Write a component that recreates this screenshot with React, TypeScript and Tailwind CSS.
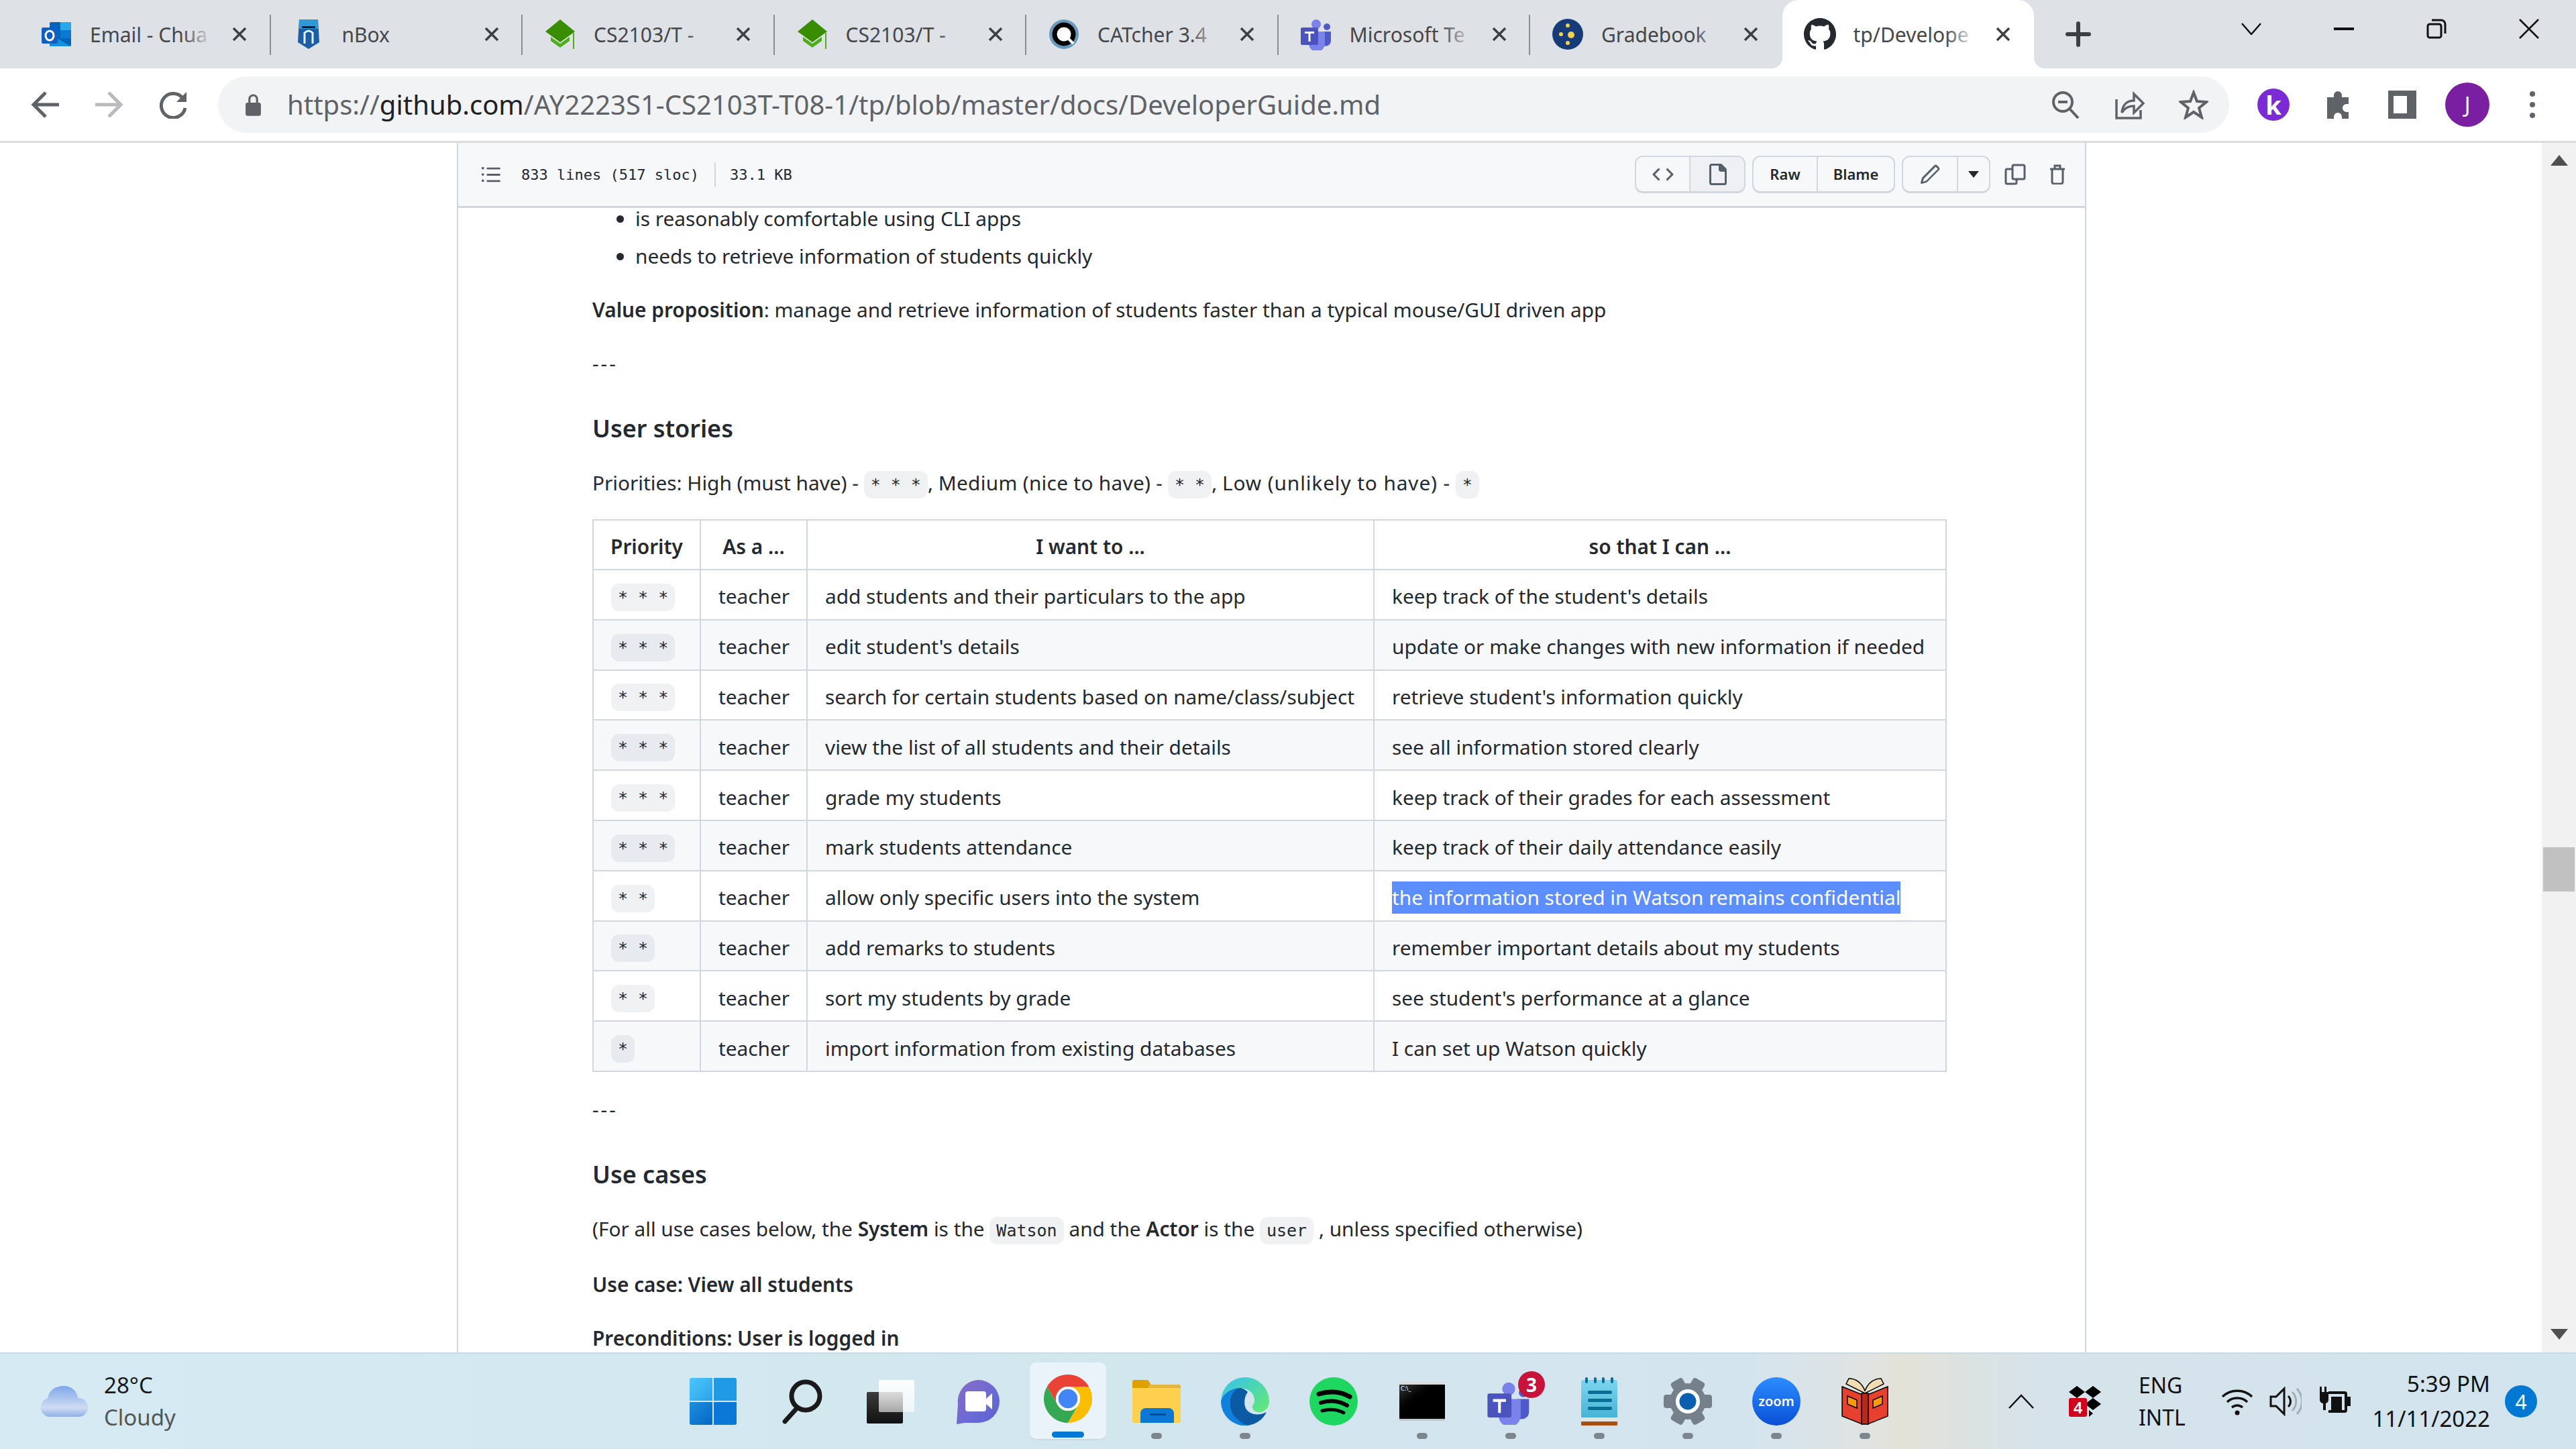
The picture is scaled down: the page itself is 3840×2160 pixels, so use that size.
import { FC, ReactNode } from 'react'

const uiFont = "font-['Noto_Sans','Open_Sans',sans-serif]"
const monoFont = "font-['DejaVu_Sans_Mono','Liberation_Mono',monospace]"

/* tab strip favicons */
const OutlookIcon = () => (
  <svg viewBox="0 0 48 48" className="w-12 h-12">
    <rect x="14" y="6" width="32" height="36" rx="2" fill="#0364b8" />
    <rect x="30" y="6" width="16" height="12" fill="#28a8ea" />
    <rect x="30" y="18" width="16" height="12" fill="#0a78d4" />
    <path d="M14 24 46 42H14Z" fill="#1490df" />
    <rect x="2" y="14" width="24" height="24" rx="2" fill="#0f5fc4" />
    <ellipse cx="14" cy="26" rx="6" ry="7" fill="none" stroke="#fff" strokeWidth="3" />
  </svg>
)

const NBoxIcon = () => (
  <svg viewBox="0 0 48 48" className="w-12 h-12">
    <path d="M10 2h28l2 34-16 10-16-10Z" fill="#1a5ea6" />
    <rect x="10" y="2" width="28" height="14" fill="#2f9ad6" />
    <rect x="14" y="12" width="20" height="3" fill="#0c1d33" />
    <path d="M18 38V22q6-6 12 0v16" fill="none" stroke="#e8f2fb" strokeWidth="3" />
  </svg>
)

const CapIcon = () => (
  <svg viewBox="0 0 48 48" className="w-12 h-12">
    <path d="M24 2 46 20 24 36 2 20Z" fill="#388e00" />
    <path d="M10 28v6l14 10 14-10v-6L24 38Z" fill="#4caf1a" />
    <rect x="43" y="22" width="2" height="24" fill="#4caf1a" />
  </svg>
)

const CatcherIcon = () => (
  <svg viewBox="0 0 48 48" className="w-12 h-12">
    <circle cx="24" cy="24" r="22" fill="#6a9bbd" />
    <circle cx="24" cy="24" r="14" fill="#fff" stroke="#000" strokeWidth="7" />
    <path d="M28 28 38 38" stroke="#fff" strokeWidth="4" />
  </svg>
)

const TeamsIcon: FC<{ size?: string }> = ({ size = 'w-12 h-12' }) => (
  <svg viewBox="0 0 48 48" className={size}>
    <circle cx="24" cy="9" r="7" fill="#7b83eb" />
    <circle cx="40" cy="13" r="5" fill="#5059c9" />
    <path d="M33 20h13v14a8 8 0 0 1-13 6Z" fill="#5059c9" />
    <path d="M13 20h24v18a12 12 0 0 1-24 0Z" fill="#7b83eb" />
    <rect x="1" y="14" width="26" height="26" rx="2" fill="#4b53bc" />
    <path d="M7 20h14v3h-5.500v12h-3V23H7Z" fill="#fff" />
  </svg>
)

const GradebookIcon = () => (
  <svg viewBox="0 0 48 48" className="w-12 h-12">
    <circle cx="24" cy="24" r="23" fill="#173a78" />
    <circle cx="24" cy="11" r="3" fill="#f5d24b" />
    <circle cx="14" cy="24" r="3" fill="#f5d24b" />
    <circle cx="29" cy="25" r="5" fill="#f5d24b" />
    <circle cx="24" cy="37" r="3" fill="#f5d24b" />
  </svg>
)

const GithubIcon = () => (
  <svg viewBox="0 0 16 16" className="w-12 h-12" fill="#24292f">
    <path d="M8 0C3.580 0 0 3.580 0 8c0 3.540 2.290 6.530 5.470 7.590.4.070.55-.17.55-.38 0-.19-.01-.82-.01-1.490-2.010.37-2.530-.49-2.690-.94-.09-.23-.48-.94-.82-1.130-.28-.15-.68-.52-.01-.53.63-.01 1.080.58 1.230.82.72 1.210 1.870.87 2.330.66.070-.52.280-.87.510-1.070-1.780-.2-3.640-.89-3.640-3.950 0-.87.310-1.590.820-2.150-.08-.2-.36-1.020.08-2.120 0 0 .67-.21 2.200.820.640-.180 1.320-.270 2-.270s1.360.090 2 .270c1.530-1.040 2.200-.820 2.200-.820.440 1.100.160 1.920.080 2.120.510.560.820 1.270.820 2.150 0 3.070-1.870 3.750-3.650 3.950.290.250.540.730.540 1.480 0 1.070-.010 1.930-.010 2.200 0 .210.150.460.550.380A8.010 8.010 0 0 0 16 8c0-4.420-3.580-8-8-8Z" />
  </svg>
)

interface TabProps {
  icon: ReactNode
  title: string
  active?: boolean
  last?: boolean
}

const Tab: FC<TabProps> = ({ icon, title, active, last }) => (
  <div
    className={`relative flex h-[102px] w-[375.500px] shrink-0 items-center pl-[32px] ${
      active ? 'rounded-t-[24px] bg-white' : ''
    }`}
  >
    {active && (
      <>
        <div className="absolute bottom-0 -left-[16px] h-4 w-4 bg-white">
          <div className="h-4 w-4 rounded-br-[16px] bg-[#dee1e6]" />
        </div>
        <div className="absolute bottom-0 -right-[16px] h-4 w-4 bg-white">
          <div className="h-4 w-4 rounded-bl-[16px] bg-[#dee1e6]" />
        </div>
      </>
    )}
    {icon}
    <div className="relative ml-[26px] w-[182px] whitespace-nowrap text-[30px] text-[#45474a]">
      {title}
      <div
        className={`absolute inset-y-0 right-0 w-[44px] bg-gradient-to-r from-transparent ${
          active ? 'to-white' : 'to-[#dee1e6]'
        }`}
      />
    </div>
    <svg viewBox="0 0 24 24" className="ml-[29px] h-6 w-6" stroke="#3c4043" strokeWidth="3.500">
      <path d="M3 3 21 21M21 3 3 21" />
    </svg>
    {!last && !active && (
      <div className="absolute right-0 top-[22px] h-[60px] w-[2px] bg-[#8a8d91]" />
    )}
  </div>
)

const TabStrip = () => (
  <div className="flex h-[102px] items-center bg-[#dee1e6] pl-[28px]">
    <Tab icon={<OutlookIcon />} title="Email - Chua" />
    <Tab icon={<NBoxIcon />} title="nBox" />
    <Tab icon={<CapIcon />} title="CS2103/T -" />
    <Tab icon={<CapIcon />} title="CS2103/T -" />
    <Tab icon={<CatcherIcon />} title="CATcher 3.4" />
    <Tab icon={<TeamsIcon />} title="Microsoft Te" />
    <Tab icon={<GradebookIcon />} title="Gradebook" last />
    <Tab icon={<GithubIcon />} title="tp/Develope" active />
    <svg viewBox="0 0 38 38" className="ml-[47px] h-[38px] w-[38px]" stroke="#3c4043" strokeWidth="6" strokeLinecap="round">
      <path d="M19 3V35M3 19H35" />
    </svg>
    <svg viewBox="0 0 30 18" className="ml-[224px] mb-[16px] h-[18px] w-[30px]" fill="none" stroke="#111" strokeWidth="2.500">
      <path d="M1 1 15 17 29 1" />
    </svg>
    <div className="ml-[108px] mb-[16px] h-[4px] w-[30px] bg-[#111]" />
    <svg viewBox="0 0 30 30" className="ml-[108px] mb-[16px] h-[30px] w-[30px]" fill="none" stroke="#111" strokeWidth="3">
      <rect x="2" y="8" width="20" height="20" rx="3" />
      <path d="M8 2h14a6 6 0 0 1 6 6v14" />
    </svg>
    <svg viewBox="0 0 30 30" className="ml-[108px] mb-[16px] h-[30px] w-[30px]" stroke="#111" strokeWidth="2.500">
      <path d="M1 1 29 29M29 1 1 29" />
    </svg>
  </div>
)

const Toolbar = () => (
  <div className="flex h-[111px] shrink-0 items-center border-b-[3px] border-[#dadce0] bg-white">
    <svg viewBox="0 0 42 42" className="ml-[46px] h-[42px] w-[42px]" fill="none" stroke="#5f6368" strokeWidth="5">
      <path d="M42 21H5M22 3 4 21l18 18" />
    </svg>
    <svg viewBox="0 0 42 42" className="ml-[54px] h-[42px] w-[42px]" fill="none" stroke="#b8babd" strokeWidth="5">
      <path d="M0 21H37M20 3l18 18-18 18" />
    </svg>
    <svg viewBox="0 0 42 42" className="ml-[54px] h-[42px] w-[42px]" fill="none" stroke="#5f6368" strokeWidth="5">
      <path d="M35 12A18 18 0 1 0 38 26" />
      <path d="M40 2V17H25Z" fill="#5f6368" stroke="none" />
    </svg>
    <div className="ml-[45px] flex h-[84px] w-[2998px] items-center rounded-full bg-[#f1f3f4] pl-[40px]">
      <svg viewBox="0 0 24 32" className="h-[34px] w-[25px]" fill="#5f6368">
        <path d="M5 13V8a7 7 0 0 1 14 0v5h-3V8a4 4 0 0 0-8 0v5Z" />
        <rect x="1" y="13" width="22" height="19" rx="3" />
      </svg>
      <div className="ml-[38px] whitespace-nowrap text-[40px] text-[#5f6368]">
        https://<span className="text-[#202124]">github.com</span>/AY2223S1-CS2103T-T08-1/tp/blob/master/docs/DeveloperGuide.md
      </div>
      <svg viewBox="0 0 42 42" className="ml-auto h-[42px] w-[42px]" fill="none" stroke="#5f6368" strokeWidth="4">
        <circle cx="17" cy="17" r="14" />
        <path d="M27 27 40 41M10 17H24" />
      </svg>
      <svg viewBox="0 0 44 44" className="ml-[53px] h-[44px] w-[44px]" fill="none" stroke="#5f6368" strokeWidth="3.500">
        <path d="M2 14V42H38V30M10 34c1-12 8-18 18-18V6l14 14-14 14V24c-8 0-14 3-18 10Z" />
      </svg>
      <svg viewBox="0 0 44 44" className="ml-[51px] mr-[31px] h-[44px] w-[44px]" fill="none" stroke="#5f6368" strokeWidth="4">
        <path d="M22 4 27 17 41 18 30 27 34 41 22 33 10 41 14 27 3 18 17 17Z" />
      </svg>
    </div>
    <div className="ml-[42px] flex h-[48px] w-[48px] items-center justify-center rounded-full bg-[#7b2bd6] text-[38px] font-bold leading-none text-white">k</div>
    <svg viewBox="0 0 42 42" className="ml-[52px] h-[42px] w-[42px]" fill="#5f6368">
      <path d="M4 10h10V7a6 6 0 0 1 12 0v3h10v10h-3a6 6 0 0 0 0 12h3v10H26v-3a6 6 0 0 0-12 0v3H4Z" />
    </svg>
    <div className="ml-[53px] h-[42px] w-[42px] border-[8px] border-r-[14px] border-[#5f6368]" />
    <div className="ml-[43px] flex h-[66px] w-[66px] items-center justify-center rounded-full bg-[#7b1fa2] text-[32px] text-white">J</div>
    <div className="ml-[60px] flex flex-col gap-[8px]">
      <div className="h-[8px] w-[8px] rounded-full bg-[#5f6368]" />
      <div className="h-[8px] w-[8px] rounded-full bg-[#5f6368]" />
      <div className="h-[8px] w-[8px] rounded-full bg-[#5f6368]" />
    </div>
  </div>
)

const FileHeader = () => (
  <div className="flex h-[97px] items-center border-b-[3px] border-[#d0d7de] bg-[#f6f8fa] pl-[33px] pr-[29px]">
    <svg viewBox="0 0 16 16" className="h-[30px] w-[30px]" fill="#57606a">
      <path d="M2 4a1 1 0 1 1 0-2 1 1 0 0 1 0 2Zm3.750-1.500h9.500a.75.75 0 0 1 0 1.500h-9.500a.75.75 0 0 1 0-1.500Zm0 5h9.500a.75.75 0 0 1 0 1.500h-9.500a.75.75 0 0 1 0-1.500Zm0 5h9.500a.75.75 0 0 1 0 1.500h-9.500a.75.75 0 0 1 0-1.500ZM2 14a1 1 0 1 1 0-2 1 1 0 0 1 0 2Zm0-5a1 1 0 1 1 0-2 1 1 0 0 1 0 2Z" />
    </svg>
    <span className={`${monoFont} ml-[31px] text-[22px] text-[#24292f]`}>833 lines (517 sloc)</span>
    <div className="ml-[23px] h-[37px] w-[2px] bg-[#d0d7de]" />
    <span className={`${monoFont} ml-[21px] text-[22px] text-[#24292f]`}>33.1 KB</span>

    <div className="ml-auto flex h-[56px] w-[165px] overflow-hidden rounded-[12px] border-2 border-b-[3px] border-[#d0d7de] bg-[#f6f8fa]">
      <div className="flex w-[81px] items-center justify-center border-r-2 border-[#d0d7de]">
        <svg viewBox="0 0 16 16" className="h-8 w-8" fill="#57606a">
          <path d="m11.280 3.220 4.250 4.250a.75.75 0 0 1 0 1.060l-4.250 4.250-1.060-1.060L13.940 8l-3.720-3.720ZM4.720 3.220l1.060 1.060L2.060 8l3.720 3.720-1.060 1.060L.470 8.530a.75.75 0 0 1 0-1.060Z" />
        </svg>
      </div>
      <div className="flex flex-1 items-center justify-center bg-[#eef0f3]">
        <svg viewBox="0 0 16 16" className="h-8 w-8" fill="#57606a">
          <path d="M2 1.750C2 .780 2.780 0 3.750 0h6.590c.460 0 .910.180 1.240.510l2.910 2.910c.330.330.510.780.510 1.240v9.590A1.750 1.750 0 0 1 13.250 16h-9.500A1.750 1.750 0 0 1 2 14.250Zm1.750-.250a.25.25 0 0 0-.250.250v12.500c0 .140.110.250.250.250h9.500a.25.25 0 0 0 .250-.250V6h-2.750A1.750 1.750 0 0 1 9 4.250V1.500Z" />
        </svg>
      </div>
    </div>
    <div className="ml-[10px] flex h-[56px] w-[213px] rounded-[12px] border-2 border-b-[3px] border-[#d0d7de] text-[22px] font-semibold text-[#24292f]">
      <div className="flex w-[96px] items-center justify-center border-r-2 border-[#d0d7de]">Raw</div>
      <div className="flex flex-1 items-center justify-center">Blame</div>
    </div>
    <div className="ml-[10px] flex h-[56px] w-[132px] rounded-[12px] border-2 border-b-[3px] border-[#d0d7de]">
      <div className="flex w-[82px] items-center justify-center border-r-2 border-[#d0d7de]">
        <svg viewBox="0 0 16 16" className="h-8 w-8" fill="#57606a">
          <path d="M11.013 1.427a1.750 1.750 0 0 1 2.474 0l1.086 1.086a1.750 1.750 0 0 1 0 2.474l-8.610 8.610c-.210.210-.470.364-.756.445l-3.251.930a.75.75 0 0 1-.927-.928l.929-3.250c.081-.286.235-.547.445-.758ZM12.427 2.487a.25.25 0 0 0-.354 0L3.462 11.100a.25.25 0 0 0-.064.108l-.631 2.206 2.206-.631a.25.25 0 0 0 .108-.064l8.610-8.610a.25.25 0 0 0 0-.354Z" />
        </svg>
      </div>
      <div className="flex flex-1 items-center justify-center">
        <div className="h-0 w-0 border-x-[8px] border-t-[10px] border-x-transparent border-t-[#24292f]" />
      </div>
    </div>
    <svg viewBox="0 0 32 32" className="ml-[21px] h-[32px] w-[32px]" fill="none" stroke="#57606a" strokeWidth="3">
      <path d="M12 8H4a2 2 0 0 0-2 2v18a2 2 0 0 0 2 2h12a2 2 0 0 0 2-2v-4" />
      <rect x="12" y="2" width="18" height="21" rx="2" />
    </svg>
    <svg viewBox="0 0 24 30" className="ml-[35px] h-[30px] w-[24px]" fill="none" stroke="#57606a" strokeWidth="3">
      <path d="M1 7H23M8 7V2h8v5M4 7v19a3 3 0 0 0 3 3h10a3 3 0 0 0 3-3V7" />
    </svg>
  </div>
)

const Code: FC<{ children: ReactNode }> = ({ children }) => (
  <code className={`${monoFont} rounded-[12px] bg-[#afb8c1]/20 px-[10px] py-[6px] text-[25px] whitespace-pre`}>
    {children}
  </code>
)

const rows: [string, string, string][] = [
  ['* * *', 'add students and their particulars to the app', "keep track of the student's details"],
  ['* * *', "edit student's details", 'update or make changes with new information if needed'],
  ['* * *', 'search for certain students based on name/class/subject', "retrieve student's information quickly"],
  ['* * *', 'view the list of all students and their details', 'see all information stored clearly'],
  ['* * *', 'grade my students', 'keep track of their grades for each assessment'],
  ['* * *', 'mark students attendance', 'keep track of their daily attendance easily'],
  ['* *', 'allow only specific users into the system', 'the information stored in Watson remains confidential'],
  ['* *', 'add remarks to students', 'remember important details about my students'],
  ['* *', 'sort my students by grade', "see student's performance at a glance"],
  ['*', 'import information from existing databases', 'I can set up Watson quickly'],
]

const UserStoriesTable = () => (
  <table className="mt-[27px] w-[2017px] table-fixed border-collapse whitespace-nowrap text-left">
    <colgroup>
      <col className="w-[160px]" />
      <col className="w-[159px]" />
      <col className="w-[845px]" />
      <col className="w-[853px]" />
    </colgroup>
    <thead>
      <tr className="h-[74px] font-semibold">
        <th className="border-2 border-[#d0d7de] pt-[6px] text-center font-semibold">Priority</th>
        <th className="border-2 border-[#d0d7de] pt-[6px] text-center font-semibold">As a ...</th>
        <th className="border-2 border-[#d0d7de] pt-[6px] text-center font-semibold">I want to ...</th>
        <th className="border-2 border-[#d0d7de] pt-[6px] text-center font-semibold">so that I can ...</th>
      </tr>
    </thead>
    <tbody>
      {rows.map(([priority, want, goal], i) => (
        <tr key={want} className={`h-[74.800px] ${i % 2 === 1 ? 'bg-[#f6f8fa]' : 'bg-white'}`}>
          <td className="border-2 border-[#d0d7de] px-[26px] pt-[6px]">
            <Code>{priority}</Code>
          </td>
          <td className="border-2 border-[#d0d7de] px-[26px] pt-[6px]">teacher</td>
          <td className="border-2 border-[#d0d7de] px-[26px] pt-[6px]">{want}</td>
          <td className="border-2 border-[#d0d7de] px-[26px] pt-[6px]">
            {i === 6 ? <span className="inline-block bg-[#5c8eff] leading-[48px] text-white">{goal}</span> : goal}
          </td>
        </tr>
      ))}
    </tbody>
  </table>
)

const Markdown = () => (
  <div className="pl-[200px] text-[29.800px] leading-[48px] text-[#24292f]">
    <ul className="list-disc pl-[64px]">
      <li className="-mt-[8px]">is reasonably comfortable using CLI apps</li>
      <li className="mt-[8px]">needs to retrieve information of students quickly</li>
    </ul>
    <p className="mt-[32px]">
      <strong className="font-semibold">Value proposition</strong>: manage and retrieve information of students faster than a typical mouse/GUI driven app
    </p>
    <p className="mt-[32px] tracking-[3px]">---</p>
    <h2 className="mt-[48px] text-[36px] font-semibold leading-[50px]">User stories</h2>
    <p className="mt-[32px]">
      Priorities: High (must have) - <Code>* * *</Code>,{' '}
      <span className="tracking-[0.3px]">Medium (nice to have) -</span> <Code>* *</Code>,{' '}
      <span className="tracking-[0.9px]">Low (unlikely to have) -</span> <Code>*</Code>
    </p>
    <UserStoriesTable />
    <p className="mt-[32px] tracking-[3px]">---</p>
    <h2 className="mt-[48px] text-[36px] font-semibold leading-[50px]">Use cases</h2>
    <p className="mt-[32px]">
      (For all use cases below, the <strong className="font-semibold">System</strong> is the <Code>Watson</Code> and the <strong className="font-semibold">Actor</strong> is the <Code>user</Code> , unless specified otherwise)
    </p>
    <p className="mt-[32px] font-semibold">Use case: View all students</p>
    <p className="mt-[32px] font-semibold">Preconditions: User is logged in</p>
  </div>
)

const Scrollbar = () => (
  <div className="flex w-[51px] shrink-0 flex-col items-center bg-[#f1f1f1]">
    <div className="mt-[18px] h-0 w-0 border-x-[13px] border-b-[16px] border-x-transparent border-b-[#505050]" />
    <div className="mt-[1016px] h-[66px] w-[47px] bg-[#c1c1c1]" />
    <div className="mt-[652px] h-0 w-0 border-x-[13px] border-t-[16px] border-x-transparent border-t-[#505050]" />
  </div>
)

const TaskIcon: FC<{ left: string; dot?: boolean; children: ReactNode }> = ({ left, dot, children }) => (
  <div className={`relative flex h-[72px] w-[72px] shrink-0 items-center justify-center ${left}`}>
    {children}
    {dot && <div className="absolute -bottom-[20px] left-[28px] h-[9px] w-[16px] rounded-full bg-[#7c868c]" />}
  </div>
)

const Taskbar = () => (
  <div className="relative flex h-[144px] shrink-0 items-center border-t-2 border-[#c8dbe4] bg-[linear-gradient(90deg,#d6eaf4_0%,#d2e6ee_45%,#d4e4ee_68%,#dfe3e3_72%,#e3e2d8_74%,#dde2e0_76%,#d6e3ea_79%,#d2e4ee_100%)]">
    <svg viewBox="0 0 72 46" className="ml-[60px] h-[46px] w-[72px] shrink-0">
      <defs>
        <linearGradient id="cloud" x1="0" y1="0" x2="0" y2="1">
          <stop offset="0" stopColor="#7ea6ea" />
          <stop offset="0.7" stopColor="#cfdcf2" />
          <stop offset="1" stopColor="#8fb0ea" />
        </linearGradient>
      </defs>
      <path d="M14 46a14 14 0 0 1-3-27.500C13 6 23 0 35 0s20 8 21 18a14 14 0 0 1 2 28Z" fill="url(#cloud)" />
    </svg>
    <div className="ml-[23px] flex w-[200px] shrink-0 flex-col text-[33px] leading-[48px]">
      <span className="text-[#1a1a1a]">28°C</span>
      <span className="text-[#555]">Cloudy</span>
    </div>
    <div className="ml-[673px] grid h-[70px] w-[70px] shrink-0 grid-cols-2 gap-[2px]">
      <div className="rounded-tl-[3px] bg-gradient-to-br from-[#4cc6fb] to-[#2aa3ea]" />
      <div className="rounded-tr-[3px] bg-[#1f9be6]" />
      <div className="rounded-bl-[3px] bg-gradient-to-br from-[#1c8fe0] to-[#0568c4]" />
      <div className="rounded-br-[3px] bg-[#0a78d6]" />
    </div>
    <svg viewBox="0 0 62 68" className="ml-[67px] h-[68px] w-[62px] shrink-0" fill="none" stroke="#1a1a1a" strokeWidth="7" strokeLinecap="round">
      <circle cx="36" cy="26" r="21" />
      <path d="M23 44 5 64" />
    </svg>
    <div className="relative ml-[65px] h-[65px] w-[71px] shrink-0">
      <div className="absolute bottom-0 left-0 h-[47px] w-[54px] rounded-[2px] bg-gradient-to-b from-[#3c3c3c] to-[#111]" />
      <div className="absolute right-0 top-0 h-[48px] w-[53px] rounded-[2px] bg-gradient-to-b from-white/95 to-white/60" />
    </div>
    <svg viewBox="0 0 68 68" className="ml-[61px] h-[68px] w-[68px] shrink-0">
      <defs>
        <linearGradient id="meet" x1="0" y1="0" x2="1" y2="1">
          <stop offset="0" stopColor="#8a6bc4" />
          <stop offset="0.6" stopColor="#6a6ad6" />
          <stop offset="1" stopColor="#5b5fcf" />
        </linearGradient>
      </defs>
      <path d="M34 2a32 32 0 0 1 0 64H14L2 68l2-30A32 32 0 0 1 34 2Z" fill="url(#meet)" />
      <rect x="15" y="19" width="31" height="30" rx="4" fill="#fff" />
      <path d="M46 30 55 22V46L46 38Z" fill="#fff" />
    </svg>

    <div className="relative ml-[43px] flex h-[116px] w-[114px] shrink-0 items-center justify-center rounded-[10px] border-b-2 border-[#c8dbe4] bg-[#eaf3f9]">
      <svg viewBox="0 0 48 48" className="mb-[6px] h-[72px] w-[72px]">
        <path d="M24 12H44.800A24 24 0 0 0 3.200 12L13.600 30A12 12 0 0 1 24 12Z" fill="#ea4335" />
        <path d="M3.200 12A24 24 0 0 0 24 48L34.400 30A12 12 0 0 1 13.600 30Z" fill="#34a853" />
        <path d="M44.800 12A24 24 0 0 1 24 48L34.400 30A12 12 0 0 0 24 12Z" fill="#fbbc04" />
        <circle cx="24" cy="24" r="12" fill="#fff" />
        <circle cx="24" cy="24" r="9.500" fill="#4285f4" />
      </svg>
      <div className="absolute bottom-[2px] left-[33px] h-[9px] w-[48px] rounded-full bg-[#0078d4]" />
    </div>

    <TaskIcon left="ml-[39px]" dot>
      <svg viewBox="0 0 72 64" className="h-[64px] w-[72px]">
        <path d="M0 3a3 3 0 0 1 3-3h20l8 12H0Z" fill="#e0a100" />
        <path d="M24 7h45a3 3 0 0 1 3 3v6H24Z" fill="#e3b53d" />
        <rect y="12" width="72" height="52" rx="3" fill="#ffd04d" />
        <path d="M12 64V50a8 8 0 0 1 8-8h34a8 8 0 0 1 8 8v14Z" fill="#0a78d4" />
        <rect x="26" y="50" width="24" height="3" fill="#064c8c" />
      </svg>
    </TaskIcon>
    <TaskIcon left="ml-[60px]" dot>
      <svg viewBox="0 0 72 72" className="h-[72px] w-[72px]">
        <defs>
          <linearGradient id="edge" x1="0" y1="0" x2="1" y2="1">
            <stop offset="0" stopColor="#35c1f1" />
            <stop offset="1" stopColor="#66eb6e" />
          </linearGradient>
        </defs>
        <path d="M0 36A36 36 0 0 1 72 36c0 10-7 16-15 16-8 0-11-5-10-10 2-2 3-4 3-8 0-12-12-18-22-18C14 16 3 26 0 36Z" fill="url(#edge)" />
        <path d="M0 36C3 24 16 16 28 16c6 0 4 2-2 8C14 36 14 56 30 66c3 2 6 4 10 6A36 36 0 0 1 0 36Z" fill="#0f80dc" />
        <path d="M28 16c-16 4-20 32-4 46 4 4 10 8 16 10A36 36 0 0 0 68 52C56 58 44 56 38 48c-4-6-4-18 2-26-4-4-8-6-12-6Z" fill="#0c59a4" />
      </svg>
    </TaskIcon>
    <TaskIcon left="ml-[60px]">
      <svg viewBox="0 0 72 72" className="h-[72px] w-[72px]" fill="none" stroke="#000" strokeLinecap="round">
        <circle cx="36" cy="36" r="36" fill="#1ed760" stroke="none" />
        <path d="M14 25c15-5 32-4 46 4" strokeWidth="7" />
        <path d="M17 38c13-4 27-3 39 4" strokeWidth="6" />
        <path d="M19 50c11-3 22-2 32 3" strokeWidth="5" />
      </svg>
    </TaskIcon>
    <TaskIcon left="ml-[60px]" dot>
      <div className="h-[58px] w-[68px] border-t-[4px] border-b-[3px] border-t-[#d8dadc] border-b-[#c4c6c8] bg-gradient-to-br from-[#3a3a3a] via-black to-black pl-[2px] text-[9px] leading-[12px] text-white">C:\_</div>
    </TaskIcon>
    <TaskIcon left="ml-[60px]" dot>
      <TeamsIcon size="h-[66px] w-[66px] mt-[4px] mr-[6px]" />
      <div className="absolute -top-[9px] -right-[15px] flex h-[40px] w-[40px] items-center justify-center rounded-full bg-[#c8143c] text-[28px] font-bold leading-none text-white">3</div>
    </TaskIcon>
    <TaskIcon left="ml-[60px]" dot>
      <svg viewBox="0 0 54 72" className="h-[72px] w-[54px]">
        <defs>
          <linearGradient id="notes" x1="0" y1="0" x2="0" y2="1">
            <stop offset="0" stopColor="#7dd6ee" />
            <stop offset="1" stopColor="#45b1d4" />
          </linearGradient>
        </defs>
        <rect y="4" width="54" height="58" rx="3" fill="url(#notes)" />
        <rect y="60" width="54" height="6" fill="#e4e4e4" />
        <rect y="66" width="54" height="6" rx="1" fill="#a8500f" />
        {[6, 19, 31, 44].map(x => (
          <rect key={x} x={x} y="0" width="4" height="9" rx="2" fill="#0a6f96" />
        ))}
        {[20, 32, 44].map(y => (
          <rect key={y} x="10" y={y} width="36" height="5" rx="2" fill="#0a6f96" />
        ))}
      </svg>
    </TaskIcon>
    <TaskIcon left="ml-[60px]" dot>
      <svg viewBox="-36 -36 72 72" className="h-[72px] w-[72px]">
        <circle r="27" fill="#76808a" />
        {[0, 60, 120, 180, 240, 300].map(a => (
          <rect key={a} x="20" y="-10" width="16" height="20" rx="4" fill="#76808a" transform={`rotate(${a})`} />
        ))}
        <circle r="18" fill="#fff" />
        <circle r="12.500" fill="#0a5fb0" />
      </svg>
    </TaskIcon>
    <TaskIcon left="ml-[60px]" dot>
      <div className="flex h-[72px] w-[72px] items-center justify-center rounded-full bg-gradient-to-b from-[#2d8cff] to-[#0b4fd6] text-[20px] font-semibold text-white">zoom</div>
    </TaskIcon>
    <TaskIcon left="ml-[60px]" dot>
      <svg viewBox="0 0 72 72" className="h-[72px] w-[72px]" stroke="#000" strokeWidth="1.500">
        <path d="M36 20C30 6 20 2 12 2L8 10l28 14 28-14-4-8c-8 0-18 4-24 18Z" fill="#f2dcb4" />
        <path d="M2 14 32 26V70L2 58Z" fill="#e8402f" />
        <path d="M70 14 40 26V70L70 58Z" fill="#e8402f" />
        <rect x="31" y="24" width="10" height="46" fill="#b8291d" />
        <path d="M10 28 24 34V46L10 40ZM62 28 48 34V46L62 40Z" fill="#ff9a0a" />
      </svg>
    </TaskIcon>

    <svg viewBox="0 0 38 22" className="ml-[178px] h-[22px] w-[38px] shrink-0" fill="none" stroke="#111" strokeWidth="2.500">
      <path d="M1 21 19 2 37 21" />
    </svg>
    <div className="relative ml-[52px] h-[46px] w-[48px] shrink-0">
      <svg viewBox="0 0 48 46" className="h-[46px] w-[48px]" fill="#000">
        <path d="M12 0 24 9 12 18 0 9ZM36 0 48 9 36 18 24 9ZM36 18 48 27 36 36 24 27ZM30 36 36 41 30 46Z" />
      </svg>
      <div className="absolute bottom-0 left-0 flex h-[28px] w-[27px] items-center justify-center rounded-[3px] bg-[#d0021b] text-[24px] font-semibold leading-none text-white">4</div>
    </div>
    <div className="ml-[56px] flex w-[123px] shrink-0 flex-col text-[32px] leading-[48px] text-[#111]">
      <span>ENG</span>
      <span>INTL</span>
    </div>
    <svg viewBox="0 0 48 42" className="h-[42px] w-[48px] shrink-0" fill="none" stroke="#111" strokeWidth="3.500">
      <path d="M2 14a32 32 0 0 1 44 0M9 22a22 22 0 0 1 30 0M16 30a12 12 0 0 1 16 0" />
      <circle cx="24" cy="38" r="3.500" fill="#111" stroke="none" />
    </svg>
    <svg viewBox="0 0 48 44" className="ml-[24px] h-[44px] w-[48px] shrink-0" fill="none" strokeWidth="3">
      <path d="M2 15H10L22 3V41L10 29H2Z" stroke="#111" />
      <path d="M28 14a11 11 0 0 1 0 16" stroke="#111" />
      <path d="M34 8a20 20 0 0 1 0 28M41 3a28 28 0 0 1 0 38" stroke="#9fb0ba" />
    </svg>
    <svg viewBox="0 0 50 46" className="ml-[24px] h-[46px] w-[50px] shrink-0" fill="#111">
      <path d="M3 1h3v8h4V1h3v8h3v12a6 6 0 0 1-4 5v10H8V26a6 6 0 0 1-5-5Z" />
      <path d="M16 8h24a4 4 0 0 1 4 4v4h5v14h-5v6a4 4 0 0 1-4 4H16v-4h24V12H16Z" />
      <rect x="20" y="16" width="16" height="20" />
    </svg>
    <div className="ml-auto flex shrink-0 flex-col items-end text-[33px] leading-[52px] text-[#111]">
      <span>5:39 PM</span>
      <span>11/11/2022</span>
    </div>
    <div className="ml-[22px] mr-[58px] flex h-[48px] w-[48px] shrink-0 items-center justify-center rounded-full bg-[#0078d4] text-[30px] text-white">4</div>
  </div>
)

const App = () => (
  <div className={`${uiFont} flex h-[2160px] w-[3840px] flex-col overflow-hidden bg-white`}>
    <TabStrip />
    <Toolbar />
    <div className="flex min-h-0 flex-1">
      <div className="ml-[681px] w-[2429px] shrink-0 overflow-hidden border-x-2 border-[#d0d7de]">
        <FileHeader />
        <Markdown />
      </div>
      <div className="flex-1" />
      <Scrollbar />
    </div>
    <Taskbar />
  </div>
)

export default App
